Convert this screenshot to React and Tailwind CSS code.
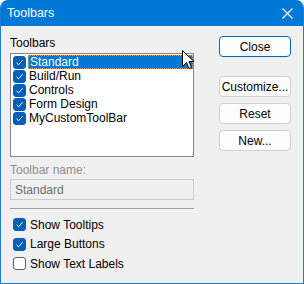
import { useState } from 'react';

const items = ['Standard', 'Build/Run', 'Controls', 'Form Design', 'MyCustomToolBar'];

const CheckBox = ({ checked, onClick }) => (
  <span
    onClick={onClick}
    className={
      'flex h-[13px] w-[13px] shrink-0 items-center justify-center rounded-[3px] border ' +
      (checked ? 'border-[#005fb8] bg-[#005fb8]' : 'border-[#5d5d5d] bg-white')
    }
  >
    {checked && (
      <svg width="9" height="9" viewBox="0 0 9 9">
        <path d="M1.5 4.8 L3.6 6.8 L7.6 2.2" fill="none" stroke="#fff" strokeWidth="1" />
      </svg>
    )}
  </span>
);

const Button = ({ children, primary }) => (
  <button
    className={
      'h-[21px] w-[72px] rounded-[4px] border bg-[#fdfdfd] text-[12px] text-black ' +
      (primary ? 'border-[#0067c0]' : 'border-[#d0d0d0]')
    }
  >
    {children}
  </button>
);

export default function App() {
  const [checked, setChecked] = useState(items.map(() => true));
  const [selected, setSelected] = useState(0);
  const [opts, setOpts] = useState({ tooltips: true, large: true, labels: false });

  const toggle = (i) => setChecked(checked.map((c, j) => (j === i ? !c : c)));

  return (
    <div
      className="relative flex h-[284px] w-[304px] flex-col overflow-hidden rounded-t-[8px] border border-t-0 border-[#1a7fd4] bg-[#f0f0f0] text-[12px] text-black"
      style={{ fontFamily: '"Liberation Sans", Arial, sans-serif' }}
    >
      {/* title bar */}
      <div className="flex h-[26px] shrink-0 items-center justify-between bg-[#0078d7] pl-[6px] pr-[10px] text-white">
        <span className="text-[12.5px]">Toolbars</span>
        <svg width="11" height="11" viewBox="0 0 11 11">
          <path d="M0.5 0.5 L10.5 10.5 M10.5 0.5 L0.5 10.5" stroke="#fff" strokeWidth="1.1" />
        </svg>
      </div>

      <div className="flex flex-1 pl-[9px] pt-[9px]">
        {/* left column */}
        <div className="flex w-[184px] flex-col">
          <div className="h-[16px] leading-[16px]">Toolbars</div>
          <div className="mt-[2px] h-[104px] border border-[#828790] bg-white pt-[1px]">
            {items.map((name, i) => (
              <div key={name} className="flex h-[14px] items-center" onClick={() => setSelected(i)}>
                <span className="pl-[2px] pr-[2px]">
                  <CheckBox checked={checked[i]} onClick={() => toggle(i)} />
                </span>
                <span
                  className={
                    'flex h-[14px] flex-1 items-center pl-[1px] leading-[14px] ' +
                    (selected === i ? 'border border-dotted border-[#f0a040] bg-[#0078d7] text-white' : '')
                  }
                >
                  {name}
                </span>
              </div>
            ))}
          </div>

          <div className="mt-[5px] h-[16px] leading-[16px] text-[#8f8f8f]">Toolbar name:</div>
          <div className="mt-[1px] flex h-[21px] items-center border border-[#cccccc] bg-[#f0f0f0] pl-[4px] text-[#6d6d6d]">
            {items[selected]}
          </div>

          <div className="mt-[8px] h-px bg-[#a0a0a0]" />

          <div className="mt-[9px] flex flex-col gap-[6.5px] pl-[3px]">
            {[
              ['tooltips', 'Show Tooltips'],
              ['large', 'Large Buttons'],
              ['labels', 'Show Text Labels'],
            ].map(([k, label]) => (
              <label key={k} className="flex h-[13px] items-center gap-[4px]">
                <CheckBox checked={opts[k]} onClick={() => setOpts({ ...opts, [k]: !opts[k] })} />
                <span>{label}</span>
              </label>
            ))}
          </div>
        </div>

        {/* right column */}
        <div className="ml-[25px] flex flex-col pt-[1px]">
          <Button primary>Close</Button>
          <div className="mt-[19px] flex flex-col gap-[6px]">
            <Button>Customize...</Button>
            <Button>Reset</Button>
            <Button>New...</Button>
          </div>
        </div>
      </div>

      {/* mouse pointer */}
      <svg className="absolute left-[181px] top-[50px]" width="13" height="20" viewBox="0 0 13 20">
        <path d="M0.5 0.5 L0.5 16.5 L4.5 12.5 L7 18.5 L9.5 17.5 L7 11.5 L12 11.5 Z" fill="#fff" stroke="#000" strokeWidth="1" />
      </svg>
    </div>
  );
}
